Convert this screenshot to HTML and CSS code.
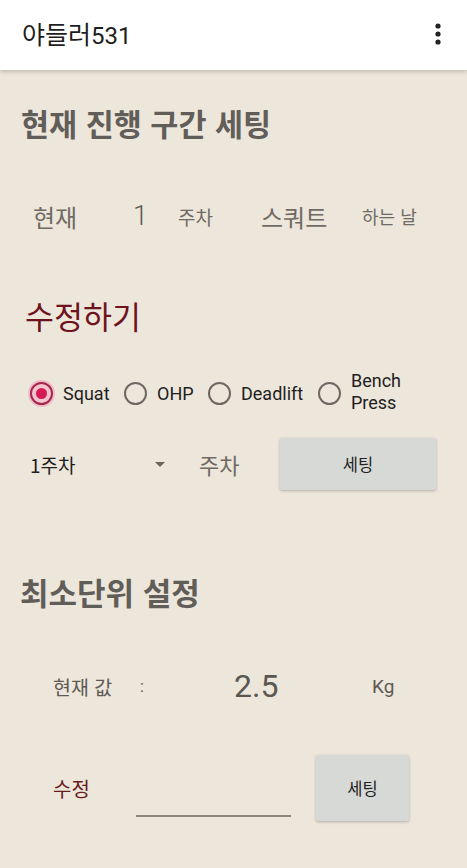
FILE: index.html
```html
<!DOCTYPE html>
<html lang="ko">
<head>
<meta charset="utf-8">
<title>야들러531</title>
<link rel="stylesheet" href="styles.css">
</head>
<body>
<header class="appbar">
  <div class="app-title">야들러<span class="app-num">531</span></div>
  <svg class="kebab" width="10" height="24" viewBox="0 0 10 24"><circle cx="5" cy="4" r="2.6"/><circle cx="5" cy="12" r="2.6"/><circle cx="5" cy="20" r="2.6"/></svg>
</header>
<main class="content">
  <h2 class="heading h-current">현재 진행 구간 세팅</h2>
  <div class="row row-status">
    <span class="st st-now">현재</span>
    <span class="st st-num">1</span>
    <span class="st st-week">주차</span>
    <span class="st st-lift">스쿼트</span>
    <span class="st st-day">하는 날</span>
  </div>

  <h2 class="heading h-edit">수정하기</h2>
  <div class="row row-radio">
    <label class="opt opt-1"><span class="radio checked"></span><span class="opt-label">Squat</span></label>
    <label class="opt opt-2"><span class="radio"></span><span class="opt-label">OHP</span></label>
    <label class="opt opt-3"><span class="radio"></span><span class="opt-label">Deadlift</span></label>
    <label class="opt opt-4"><span class="radio"></span><span class="opt-label two">Bench<br>Press</span></label>
  </div>
  <div class="row row-week">
    <div class="spinner"><span class="spin-text">1주차</span><span class="spin-arrow"></span></div>
    <span class="week-label">주차</span>
    <button class="btn btn-wide">세팅</button>
  </div>

  <h2 class="heading h-unit">최소단위 설정</h2>
  <div class="row row-value">
    <span class="val-label">현재 값</span>
    <span class="val-colon">:</span>
    <span class="val-num">2.5</span>
    <span class="val-unit">Kg</span>
  </div>
  <div class="row row-edit">
    <span class="edit-label">수정</span>
    <span class="edit-input"></span>
    <button class="btn btn-small">세팅</button>
  </div>
</main>
</body>
</html>
```

FILE: styles.css
```css
* { box-sizing: border-box; }
html, body { margin: 0; padding: 0; }
body {
  width: 467px;
  height: 868px;
  overflow: hidden;
  background: #ede6db;
  font-family: "Noto Sans CJK KR", Roboto, sans-serif;
  color: #222;
}
.appbar {
  height: 70px;
  background: #fff;
  display: flex;
  align-items: center;
  justify-content: space-between;
  padding: 0 24px 0 22px;
  box-shadow: 0 2px 4px rgba(0,0,0,0.18);
  position: relative;
  z-index: 1;
}
.app-title {
  font-family: "Noto Sans CJK KR", sans-serif;
  font-size: 25px;
  line-height: 32px;
  color: #1e1e1e;
  margin-top: -2px;
}
.app-num { font-family: Roboto, sans-serif; font-size: 24px; }
.kebab { fill: #222; margin-top: -2px; }

.content { padding: 0; }
.heading {
  margin: 0;
  font-weight: 700;
  color: #615d58;
  line-height: 36px;
  height: 36px;
}
.h-current { margin-top: 35px; padding-left: 21px; font-size: 30.5px; }
.h-edit { margin-top: 59px; padding-left: 25px; font-size: 31.5px; font-weight: 400; color: #6e1220; line-height: 40px; height: 40px; }
.h-unit { margin-top: 84px; padding-left: 20px; font-size: 31px; }

.row { display: flex; align-items: center; }

.row-status { margin-top: 55px; height: 40px; padding-left: 33px; color: #6f6a64; }
.st { display: block; }
.st-now { width: 100px; font-size: 24px; }
.st-num { width: 45px; font-family: Roboto, sans-serif; font-size: 27px; font-weight: 300; color: #5e5a55; }
.st-week { width: 83px; font-size: 19px; }
.st-lift { width: 101px; font-size: 24px; }
.st-day { font-size: 18px; }

.row-radio { margin-top: 33px; height: 50px; padding-left: 30px; }
.opt { display: flex; align-items: center; }
.opt-1 { width: 94px; }
.opt-2 { width: 84px; }
.opt-3 { width: 110px; }
.radio {
  width: 23px;
  height: 23px;
  border-radius: 50%;
  border: 2px solid #6d6862;
  flex: none;
  margin-right: 10px;
  position: relative;
}
.radio.checked {
  border-color: #a3284a;
  background: #f3c3cf;
  box-shadow: 0 0 0 2px rgba(241, 178, 196, 0.8);
}
.radio.checked::after {
  content: "";
  position: absolute;
  left: 4px; top: 4px;
  width: 11px; height: 11px;
  border-radius: 50%;
  background: #d51b55;
}
.opt-label {
  font-family: Roboto, sans-serif;
  font-size: 18px;
  color: #1e1e1e;
}
.opt-label.two { line-height: 22px; margin-top: -2px; }

.row-week { margin-top: 20px; height: 52px; padding-left: 30px; }
.spinner { width: 169px; display: flex; align-items: center; }
.spin-text { width: 125px; font-size: 19px; color: #1e1e1e; }
.spin-arrow {
  width: 0; height: 0;
  border-left: 5px solid transparent;
  border-right: 5px solid transparent;
  border-top: 5px solid #6a6560;
  margin-top: 1px;
}
.week-label { width: 81px; font-size: 22px; color: #6f6a64; }
.btn {
  font-family: "Noto Sans CJK KR", sans-serif;
  font-size: 16.5px;
  color: #222;
  background: #d7d9d6;
  border: none;
  border-radius: 2px;
  box-shadow: 0 1px 3px rgba(0,0,0,0.25);
  padding: 0;
}
.btn-wide { width: 156px; height: 52px; }

.row-value { margin-top: 56px; height: 40px; padding-left: 53px; color: #5d5954; }
.val-label { width: 87px; font-size: 19.5px; }
.val-colon { width: 94px; font-size: 16px; font-family: Roboto, sans-serif; }
.val-num { width: 138px; font-family: Roboto, sans-serif; font-size: 32px; color: #5a5651; }
.val-unit { font-family: Roboto, sans-serif; font-size: 19px; }

.row-edit { margin-top: 49px; height: 66px; padding-left: 53px; }
.edit-label { width: 83px; font-size: 20px; color: #6a1d1d; }
.edit-input {
  width: 155px;
  height: 2px;
  background: #8c857b;
  margin-top: 56px;
  margin-right: 25px;
}
.btn-small { width: 93px; height: 66px; }
```
